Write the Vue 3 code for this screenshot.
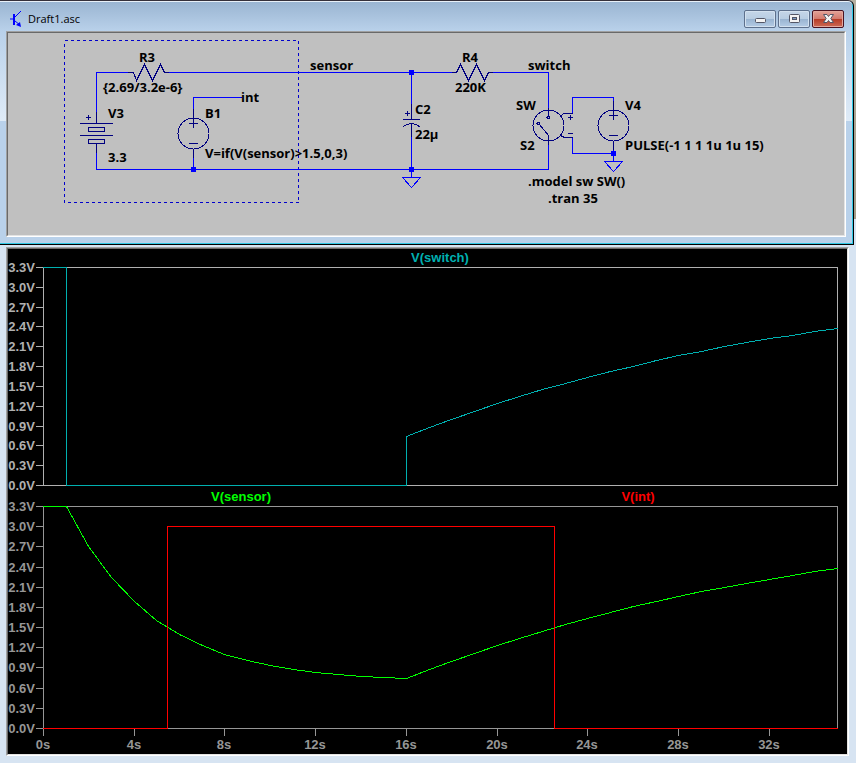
<template>
    <main class="desktop">

        <!-- ========================= --><!-- 1. SCHEMATIC WINDOW --><!-- ========================= -->
        <section class="window schematic">
            <header class="titlebar">
                <svg class="app-icon" width="14" height="18" viewBox="0 0 14 18" aria-hidden="true">
                    <path d="M1 9H5M6 7L12 1M6 11L11 15" />
                    <path class="bar" d="M5 4V15" />
                    <path class="arrow" d="M12 17L7 15L11 12Z" />
                </svg>
                <h1>Draft1.asc</h1>
                <div class="buttons">
                    <button type="button" aria-label="Minimize">
                        <svg width="13" height="11" viewBox="0 0 13 11">
                            <rect x="1.5" y="5.5" width="10" height="4" rx="1" />
                        </svg>
                    </button>
                    <button type="button" aria-label="Maximize">
                        <svg width="13" height="11" viewBox="0 0 13 11">
                            <rect x="1.5" y="1.5" width="10" height="8" rx="1" />
                            <rect class="hole" x="4.5" y="4.5" width="4" height="2" />
                        </svg>
                    </button>
                    <button type="button" class="close" aria-label="Close">
                        <svg width="13" height="11" viewBox="0 0 13 11">
                            <path d="M1.5 1.5H5L6.5 3.5L8 1.5H11.5L8.8 5.5L11.5 9.5H8L6.5 7.5L5 9.5H1.5L4.2 5.5Z" />
                        </svg>
                    </button>
                </div>
            </header>

            <div class="client">
                <svg class="sheet" viewBox="8 33 836 202">
                    <g class="lines" transform="translate(0.5 0.5)">
                        <rect class="dashed" x="64" y="40" width="234" height="162" />

                        <path class="wire" d="M96 112V72H128M168 72H452M492 72H548V108" />
                        <path class="wire" d="M96 152V169H548V141M193 169V157M193 109V97H241" />
                        <path class="wire" d="M411 72V104M411 136V177" />
                        <path class="wire" d="M572 113V97H613V109M572 137V153H613M613 145V161" />
                        <path class="wire" d="M402 177H420L411 187ZM604 161H622L613 171Z" />

                        <!-- R3, R4 -->
                        <path class="part" d="M128 72H133L136 80L144 64L152 80L160 64L164 72H168" />
                        <path class="part" d="M452 72H456L460 64L468 80L476 64L484 80L488 72H492" />

                        <!-- V3 -->
                        <path class="part" d="M96 112V123M80 123H112M88 127H104V131H88ZM80 135H112M88 139H104V143H88ZM96 143V152" />
                        <path class="part" d="M86 117H90M88 115V119" />

                        <!-- B1 and V4 -->
                        <g v-for="s in sources" :key="s.x" class="part" :transform="`translate(${s.x} ${s.y})`">
                            <circle r="15.5" />
                            <path d="M0 -24V-16M0 16V24M-4 -10H4M0 -14V-6M-4 10H4" />
                        </g>

                        <!-- C2 -->
                        <path class="part" d="M411 104V119M403 119H419M403 126Q411 120 419 126M411 123V136M405 113H409M407 111V115" />

                        <!-- S2 -->
                        <circle class="part" cx="548" cy="125" r="15.5" />
                        <circle class="part" cx="548" cy="117" r="1.5" />
                        <circle class="part" cx="538" cy="123" r="1.5" />
                        <path class="part" d="M548 108V115M539 124L548 135V144M560 116L563 113H572M560 135L564 137H572" />
                        <path class="part" d="M568 117H572M570 115V119M568 133H572" />

                        <rect v-for="j in junctions" :key="j.join()" class="junction" :x="j[0] - 2" :y="j[1] - 2" width="4" height="4" />
                    </g>

                    <text v-for="l in labels" :key="l.text + l.x" :x="l.x" :y="l.y">{{ l.text }}</text>
                </svg>
            </div>
        </section>

        <!-- ========================= --><!-- 2. WAVEFORM WINDOW --><!-- ========================= -->
        <section class="window waveform">
            <div class="client">
                <svg class="plot" viewBox="0 0 839 505">
                    <g v-for="p in panes" :key="p.name" :class="p.name">
                        <g class="lines" transform="translate(0.5 0.5)">
                            <rect class="frame" :x="left" :y="p.top" :width="right - left" :height="p.bottom - p.top" />
                            <path class="frame" :d="ticks(p)" />
                            <path v-for="t in p.traces" :key="t.name" :class="t.name" :d="trace(p, t.points)" />
                        </g>
                        <text v-for="v in volts" :key="v" class="axis" x="27" :y="yPos(p, v) + 5" text-anchor="end">{{ v.toFixed(1) }}V</text>
                        <text v-for="t in p.traces" :key="t.name" :class="['name', t.name]" :x="t.x" :y="p.top - 5" text-anchor="middle">V({{ t.name }})</text>
                    </g>
                    <g class="lower">
                        <text v-for="s in seconds" :key="s" class="axis" :x="xPos(s)" y="500" text-anchor="middle">{{ s }}s</text>
                    </g>
                </svg>
            </div>
        </section>
    </main>
</template>

<script setup>
    const sources = [{ x: 193, y: 133 }, { x: 613, y: 125 }]
    const junctions = [[193, 169], [411, 72], [411, 169], [613, 153]]

    const labels = [
        { text: 'R3', x: 139, y: 62 },
        { text: '{2.69/3.2e-6}', x: 103, y: 92 },
        { text: 'V3', x: 108, y: 118 },
        { text: '3.3', x: 108, y: 162 },
        { text: 'int', x: 241, y: 102 },
        { text: 'B1', x: 205, y: 118 },
        { text: 'V=if(V(sensor)>1.5,0,3)', x: 205, y: 158 },
        { text: 'sensor', x: 310, y: 70 },
        { text: 'C2', x: 415, y: 114 },
        { text: '22µ', x: 415, y: 139 },
        { text: 'R4', x: 462, y: 62 },
        { text: '220K', x: 455, y: 92 },
        { text: 'switch', x: 528, y: 70 },
        { text: 'SW', x: 516, y: 110 },
        { text: 'S2', x: 520, y: 150 },
        { text: 'V4', x: 625, y: 110 },
        { text: 'PULSE(-1 1 1 1u 1u 15)', x: 625, y: 150 },
        { text: '.model sw SW()', x: 528, y: 186 },
        { text: '.tran 35', x: 548, y: 203 }
    ]

    const left = 35
    const right = 829
    const vMax = 3.3
    const tMax = 35
    const volts = Array.from({ length: 12 }, (_, i) => i * 0.3)
    const seconds = [0, 4, 8, 12, 16, 20, 24, 28, 32]

    // RC values of the circuit: the switch closes at 1s and opens at 16s
    const cap = 22e-6
    const r3 = 2.69 / 3.2e-6
    const r4 = 220e3
    const vLow = vMax * r4 / (r3 + r4)
    const tauClosed = cap * r3 * r4 / (r3 + r4)
    const tauOpen = cap * r3

    function sensor(t) {
        if (t <= 1) return vMax
        if (t <= 16) return vLow + (vMax - vLow) * Math.exp(-(t - 1) / tauClosed)
        return vMax - (vMax - sensor(16)) * Math.exp(-(t - 16) / tauOpen)
    }

    function sample(from, to) {
        const points = []
        for (let t = from; t < to; t++) points.push([t, sensor(t)])
        points.push([to, sensor(to)])
        return points
    }

    const tFall = 1 + tauClosed * Math.log((vMax - vLow) / (1.5 - vLow))
    const tRise = 16 + tauOpen * Math.log((vMax - sensor(16)) / (vMax - 1.5))

    const panes = [
        {
            name: 'upper',
            top: 18,
            bottom: 236,
            traces: [
                { name: 'switch', x: 432, points: [[0, vMax], [1, vMax], [1, 0], [16, 0], ...sample(16, tMax)] }
            ]
        },
        {
            name: 'lower',
            top: 257,
            bottom: 479,
            traces: [
                { name: 'sensor', x: 233, points: sample(0, tMax) },
                { name: 'int', x: 630, points: [[0, 0], [tFall, 0], [tFall, 3], [tRise, 3], [tRise, 0], [tMax, 0]] }
            ]
        }
    ]

    function xPos(t) {
        return Math.round(left + t / tMax * (right - left))
    }

    function yPos(pane, v) {
        return Math.round(pane.bottom - v / vMax * (pane.bottom - pane.top))
    }

    function trace(pane, points) {
        return 'M' + points.map(([t, v]) => `${xPos(t)} ${yPos(pane, v)}`).join('L')
    }

    function ticks(pane) {
        let d = volts.map(v => `M${left - 7} ${yPos(pane, v)}H${left}`).join('')
        if (pane.name === 'lower') d += seconds.map(s => `M${xPos(s)} ${pane.bottom}V${pane.bottom + 7}`).join('')
        return d
    }
</script>

<style>
    body {
        background: linear-gradient(#b5b0a2, #a39a86 219px, #d7e4f2 219px) no-repeat #d7e4f2;
    }
</style>

<style scoped>
    .desktop {
        display: flex;
        flex-direction: column;
    }

    .schematic {
        margin-right: 2px;
        padding: 0 6px 6px;
        border: 1px solid #000;
        border-left: 0;
        border-top-color: #35303a;
        border-top-right-radius: 6px;
        background: linear-gradient(#99b4d1, #b9d1ea 30px, #dfebf7 120px, #b9d1ea 120px);
        box-shadow: inset -1px -1px #2fc9e6, inset 0 1px #e8f0f8;
    }

    /* the right frame also holds the cyan edge line */
    .schematic .client {
        margin-right: 1px;
        margin-bottom: 1px;
    }

    .titlebar {
        display: flex;
        align-items: center;
        height: 30px;
        padding: 5px 3px 0 3px;
        box-sizing: border-box;
    }

    .app-icon {
        fill: none;
        stroke: #00f;
        stroke-width: 1;
    }

    .app-icon .bar {
        stroke-width: 2;
    }

    .app-icon .arrow {
        fill: #00f;
        stroke: none;
    }

    h1 {
        flex: 1;
        margin: 0 0 0 5px;
        font: 400 11px/14px "Open Sans", "Noto Sans", sans-serif;
        color: #000;
    }

    .buttons {
        display: flex;
        gap: 2px;
    }

    button {
        display: flex;
        align-items: center;
        justify-content: center;
        width: 32px;
        height: 18px;
        padding: 0;
        border: 1px solid #5d708c;
        border-radius: 2px;
        background: linear-gradient(#c5d6e8, #b8cde2 50%, #98b3d0 50%, #b5cce5);
        box-shadow: inset 0 0 0 1px #d3e1ef;
    }

    button svg {
        flex: none;
        fill: #f3f3f3;
        stroke: #535666;
    }

    button .hole {
        fill: #7b9cc4;
    }

    button.close {
        border-color: #4a1220;
        background: linear-gradient(#e3a298, #d3796c 50%, #b63a25 50%, #cc6a55);
        box-shadow: inset 0 0 0 1px #e3a79c;
    }

    .waveform {
        padding: 2px 7px 7px 6px;
        background: #d7e4f2;
    }

    .client {
        border: 1px solid;
        border-color: #a0a0a0 #fff #fff #a0a0a0;
    }

    .sheet,
    .plot {
        display: block;
        width: 100%;
        height: auto;
        box-sizing: border-box;
        border: 1px solid;
        border-color: #696969 #e3e3e3 #e3e3e3 #696969;
    }

    .sheet {
        background: #c0c0c0;
        font: 700 13px "Open Sans", "Noto Sans", sans-serif;
    }

    .plot {
        background: #000;
        font: 700 13px "Liberation Sans", Arial, sans-serif;
    }

    .lines {
        fill: none;
        stroke-width: 1;
        stroke-linecap: square;
        shape-rendering: crispEdges;
    }

    .wire {
        stroke: #00f;
    }

    .part {
        stroke: #000080;
    }

    .dashed {
        stroke: #00c;
        stroke-dasharray: 3 3;
        stroke-linecap: butt;
    }

    .junction {
        fill: #00f;
        stroke: #00f;
    }

    .upper .frame {
        stroke: #b0b0b0;
    }

    .lower .frame {
        stroke: #969696;
    }

    .upper .axis {
        fill: #b0b0b0;
    }

    .lower .axis {
        fill: #969696;
    }

    path.switch {
        stroke: #00b0b0;
    }

    path.sensor {
        stroke: #0f0;
    }

    path.int {
        stroke: #f00;
    }

    .name.switch {
        fill: #00b0b0;
    }

    .name.sensor {
        fill: #0f0;
    }

    .name.int {
        fill: #f00;
    }
</style>
